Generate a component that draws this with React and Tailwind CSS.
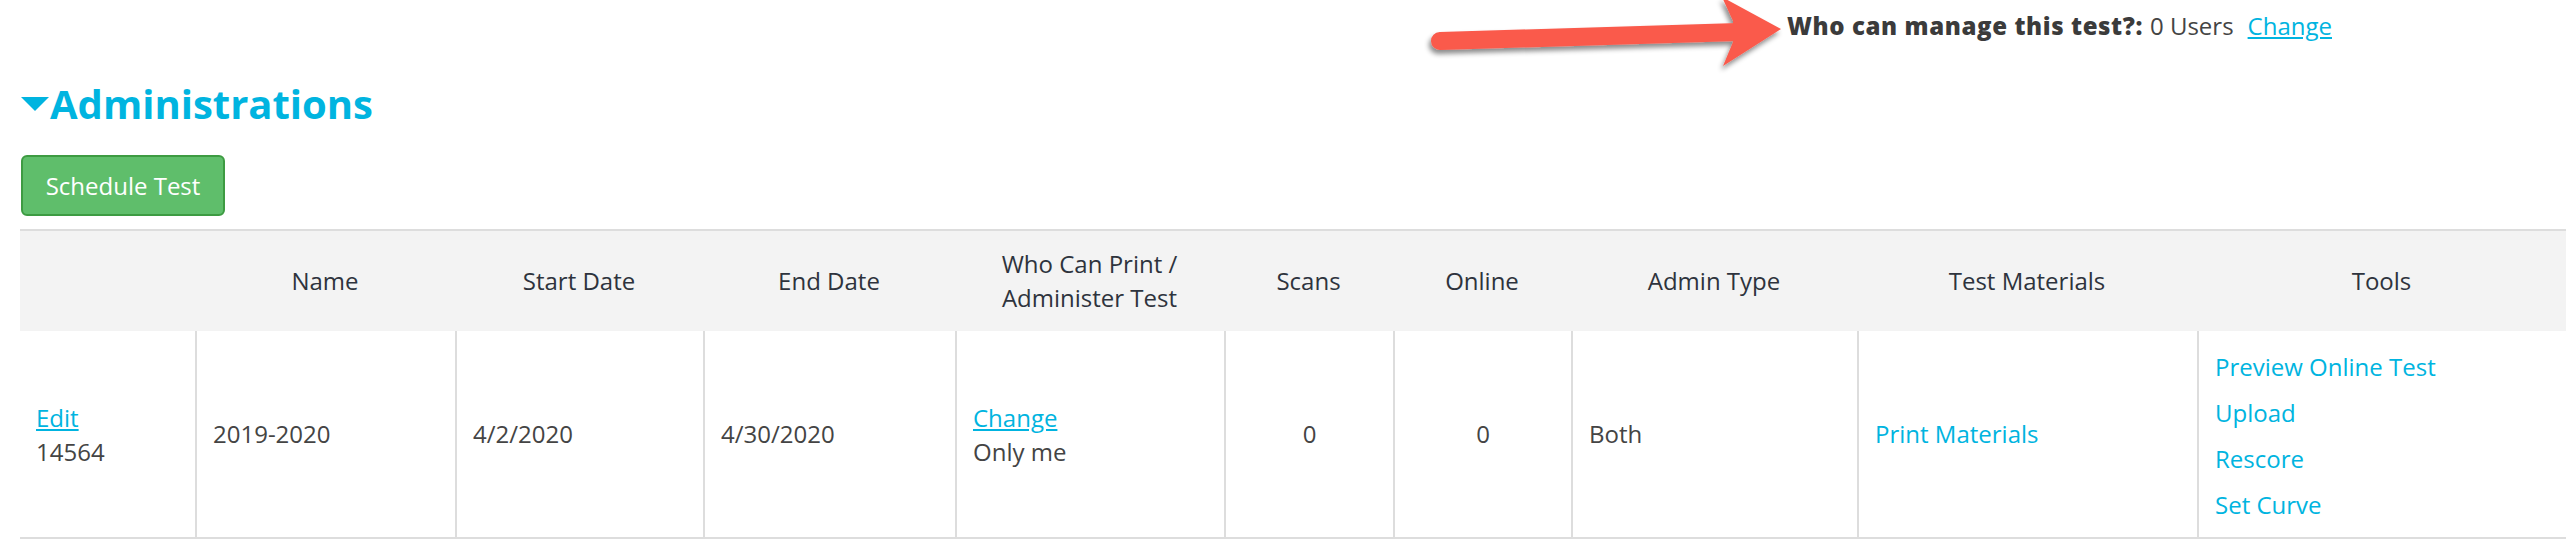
import React from "react";

const FONT = { fontFamily: '"Open Sans", "Liberation Sans", sans-serif' };

const cols = "grid-cols-[175px_260px_248px_252px_269px_169px_178px_286px_340px_1fr]";

function Arrow() {
  return (
    <svg
      className="absolute left-[1420px] top-0"
      width="380"
      height="80"
      viewBox="0 0 380 80"
    >
      <defs>
        <filter id="sh" x="-10%" y="-40%" width="120%" height="200%">
          <feDropShadow dx="-2" dy="4" stdDeviation="2.5" floodColor="#000" floodOpacity="0.45" />
        </filter>
      </defs>
      <g filter="url(#sh)" fill="#fa5a4c" stroke="none">
        <line x1="20" y1="41" x2="318" y2="32" stroke="#fa5a4c" strokeWidth="18" strokeLinecap="round" />
        <polygon points="302,-3 361,29 303,66 313,42 313,21" />
      </g>
    </svg>
  );
}

export default function App() {
  const th = "flex items-center justify-center text-center px-[16px] text-[#2e333d]";
  const td = "flex flex-col justify-center px-[16px] border-l-2 border-[#dddddd]";
  const link = "text-[#00b4e0]";
  return (
    <div className="relative bg-white text-[24px] leading-[1.42857] text-[#444444] w-[2566px] h-[542px] overflow-hidden" style={FONT}>
      <Arrow />
      <div className="flex justify-end pr-[234px] pt-[9px]">
        <span className="font-extrabold tracking-[0.6px] text-[#3b3b3b]">Who can manage this test?:</span>
        <span className="ml-[7px]">0 Users</span>
        <a className={`${link} underline ml-[14px]`} href="#">Change</a>
      </div>

      <div className="pl-[21px] mt-[39px] flex items-center h-[44px]">
        <svg width="28" height="14" viewBox="0 0 28 14" className="mt-[-1px]">
          <polygon points="0,0 28,0 14,14" fill="#00b4e0" />
        </svg>
        <h2 className="ml-[1px] text-[40px] leading-[44px] font-bold text-[#00b4e0]">Administrations</h2>
      </div>

      <div className="pl-[21px] mt-[29px]">
        <button className="w-[204px] h-[61px] rounded-[6px] bg-[#5fbe6b] border-2 border-[#3d9b42] text-white flex items-center justify-center">
          Schedule Test
        </button>
      </div>

      <div className="ml-[20px] mt-[13px] border-t-2 border-b-2 border-[#dddddd]">
        <div className={`grid ${cols} bg-[#f3f3f3] h-[100px]`}>
          <div className={th}></div>
          <div className={th}>Name</div>
          <div className={th}>Start Date</div>
          <div className={th}>End Date</div>
          <div className={th}>Who Can Print / Administer Test</div>
          <div className={th}>Scans</div>
          <div className={th}>Online</div>
          <div className={th}>Admin Type</div>
          <div className={th}>Test Materials</div>
          <div className={th}>Tools</div>
        </div>
        <div className={`grid ${cols} h-[206px]`}>
          <div className="flex flex-col justify-center px-[16px] pt-[1px]">
            <a href="#" className={`${link} underline self-start`}>Edit</a>
            <span>14564</span>
          </div>
          <div className={td}>2019-2020</div>
          <div className={td}>4/2/2020</div>
          <div className={td}>4/30/2020</div>
          <div className={`${td} pt-[1px]`}>
            <a href="#" className={`${link} underline self-start`}>Change</a>
            <span>Only me</span>
          </div>
          <div className={`${td} items-center`}>0</div>
          <div className={`${td} items-center`}>0</div>
          <div className={td}>Both</div>
          <div className={td}>
            <a href="#" className={link}>Print Materials</a>
          </div>
          <div className={`${td} gap-[11.7px] pt-[3px]`}>
            <a href="#" className={link}>Preview Online Test</a>
            <a href="#" className={link}>Upload</a>
            <a href="#" className={link}>Rescore</a>
            <a href="#" className={link}>Set Curve</a>
          </div>
        </div>
      </div>
    </div>
  );
}
